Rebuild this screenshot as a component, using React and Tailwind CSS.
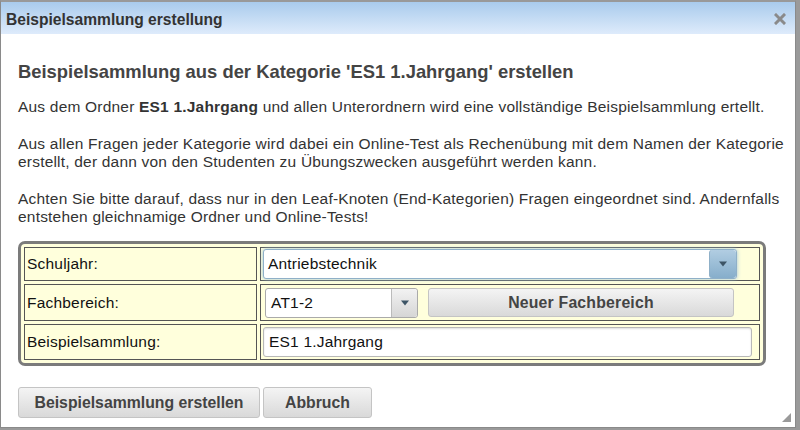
import React from "react"

const font = { fontFamily: '"Liberation Sans", Arial, sans-serif' }

const Arrow = ({ className = "" }) => (
  <svg width="10" height="6" viewBox="0 0 10 6" className={className}>
    <path d="M1 0.5 L9 0.5 L5 5.5 Z" fill="#3d5566" />
  </svg>
)

const Row = ({ label, children }) => (
  <>
    <div className="border border-[#555] bg-[#ffffdc] flex items-center px-[2px] text-[15.5px] tracking-[0.2px] text-[#111]">{label}</div>
    <div className="border border-[#555] bg-[#ffffdc] flex items-center px-[2px]">{children}</div>
  </>
)

export default function App() {
  return (
    <div className="w-[800px] h-[430px] bg-[#9a9a9a] overflow-hidden" style={font}>
      <div className="w-[796px] h-[428px] bg-white border border-[#8a8a8a] border-t-2 border-t-[#999] relative flex flex-col">
        {/* title bar */}
        <div className="h-[32px] shrink-0 bg-gradient-to-b from-[#a9cbec] to-[#deebfb] flex items-center justify-between pl-[5px] pr-[9px] pt-[4px]">
          <span className="font-bold text-[15.6px] text-[#333]">Beispielsammlung erstellung</span>
          <svg width="12" height="12" viewBox="0 0 12 12" className="-mt-[3px]">
            <path d="M2 2 L10 10 M10 2 L2 10" stroke="#8a8a8a" strokeWidth="3" strokeLinecap="square" />
          </svg>
        </div>

        <div className="pl-[17px] pr-[1px] text-[15.5px] tracking-[0.2px] text-[#333] leading-[18px]">
          <h2 className="font-bold text-[18.4px] tracking-normal text-[#444] mt-[27px] mb-[15px] leading-[22px]">
            Beispielsammlung aus der Kategorie 'ES1 1.Jahrgang' erstellen
          </h2>
          <p className="mb-[19px]">
            Aus dem Ordner <b>ES1 1.Jahrgang</b> und allen Unterordnern wird eine vollständige Beispielsammlung ertellt.
          </p>
          <p className="mb-[19px]">
            Aus allen Fragen jeder Kategorie wird dabei ein Online-Test als Rechenübung mit dem Namen der Kategorie erstellt, der dann von den Studenten zu Übungszwecken ausgeführt werden kann.
          </p>
          <p>
            Achten Sie bitte darauf, dass nur in den Leaf-Knoten (End-Kategorien) Fragen eingeordnet sind. Andernfalls entstehen gleichnamige Ordner und Online-Tests!
          </p>

          {/* form box */}
          <div className="mt-[15px] w-[748px] border-[3px] border-[#7b7b7b] rounded-[7px] bg-[#ffffdc] p-[3px] grid grid-cols-[233px_1fr] grid-rows-[34px_37px_36px] gap-[3px]">
            <Row label="Schuljahr:">
              <div className="flex w-[474px] h-[30px] border border-[#8fb0c8] rounded-[3px] bg-white shadow-[0_0_4px_#9fc3dc] items-center">
                <span className="flex-1 pl-[4px] text-[#111]">Antriebstechnik</span>
                <div className="w-[27px] h-[28px] rounded-[3px] bg-gradient-to-b from-[#b1cde2] to-[#86aecb] border-l border-[#8fb0c8] flex items-center justify-center">
                  <Arrow />
                </div>
              </div>
            </Row>
            <Row label="Fachbereich:">
              <div className="flex items-center gap-[10px]">
                <div className="flex w-[153px] h-[30px] border border-[#aaa] rounded-[3px] bg-white items-center ml-[2px]">
                  <span className="flex-1 pl-[5px] text-[#111]">AT1-2</span>
                  <div className="w-[26px] h-[28px] border-l border-[#bbb] rounded-r-[3px] bg-gradient-to-b from-[#f2f2f2] to-[#d6d6d6] flex items-center justify-center">
                    <Arrow />
                  </div>
                </div>
                <button className="w-[306px] h-[29px] border border-[#c4c4c4] rounded-[3px] bg-gradient-to-b from-[#f4f4f4] to-[#d9d9d9] font-bold text-[15.8px] text-[#444]">
                  Neuer Fachbereich
                </button>
              </div>
            </Row>
            <Row label="Beispielsammlung:">
              <div className="w-[489px] h-[30px] border border-[#b8b8b8] rounded-[3px] bg-white flex items-center pl-[5px] text-[#111] shadow-[inset_0_1px_2px_#ddd]">
                ES1 1.Jahrgang
              </div>
            </Row>
          </div>

          {/* buttons */}
          <div className="mt-[21px] flex gap-[3px]">
            <button className="w-[242px] h-[31px] border border-[#c4c4c4] rounded-[3px] bg-gradient-to-b from-[#f4f4f4] to-[#d9d9d9] font-bold text-[15.8px] tracking-normal text-[#444]">
              Beispielsammlung erstellen
            </button>
            <button className="w-[109px] h-[31px] border border-[#c4c4c4] rounded-[3px] bg-gradient-to-b from-[#f4f4f4] to-[#d9d9d9] font-bold text-[15.8px] tracking-normal text-[#444]">
              Abbruch
            </button>
          </div>
        </div>

        {/* resize grip */}
        <svg width="9" height="9" viewBox="0 0 9 9" className="absolute right-[4px] bottom-[5px]">
          <path d="M9 0 L9 9 L0 9 Z" fill="#9a9a9a" />
        </svg>
      </div>
    </div>
  )
}
